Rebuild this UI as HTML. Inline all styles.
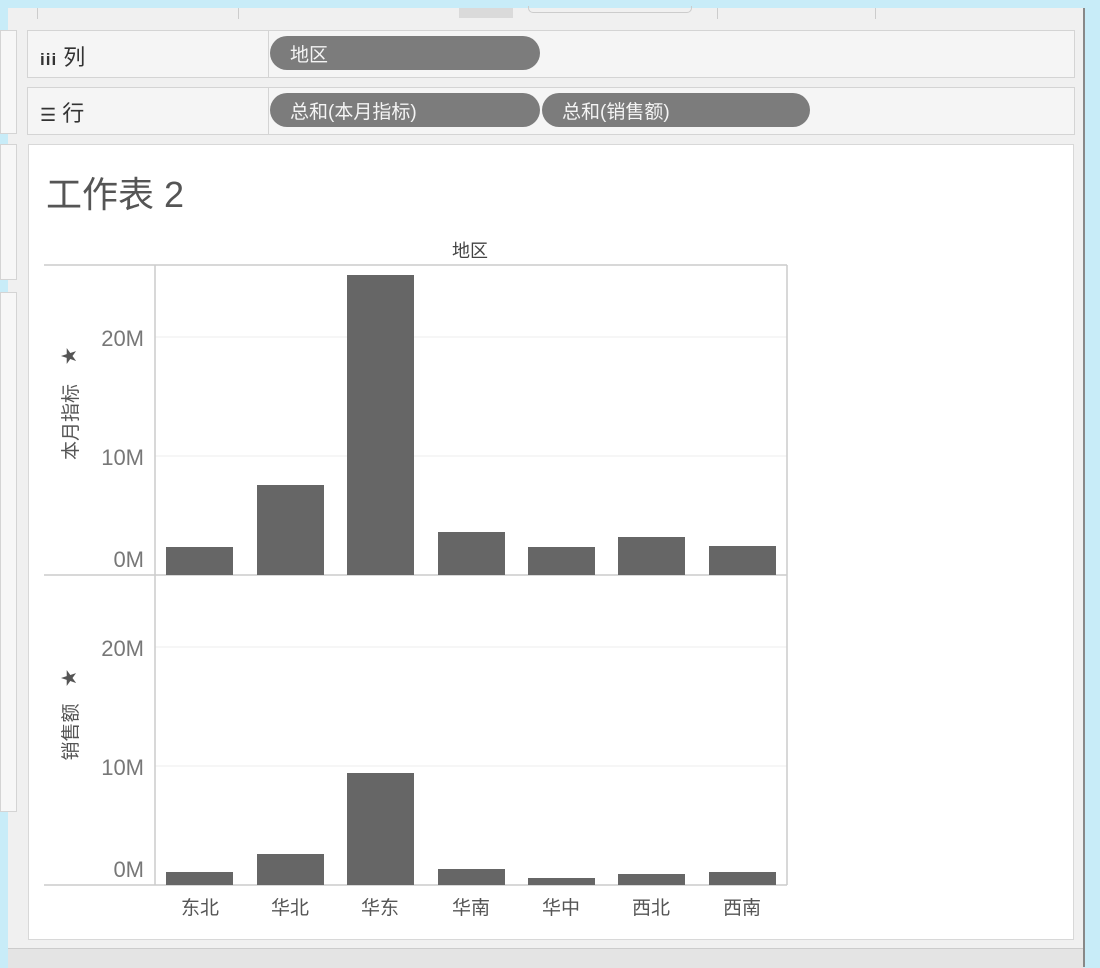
<!DOCTYPE html>
<html><head><meta charset="utf-8"><style>
body{margin:0;width:1100px;height:967px;background:#c8ecf8;position:relative;overflow:hidden;font-family:"Liberation Sans","Noto Sans CJK SC",sans-serif}
.a{position:absolute}
.shelf{background:#f5f5f5;border:1px solid #d4d4d4;box-sizing:border-box}
.pill{position:absolute;background:#7c7c7c;color:#f4f4f4;border-radius:18px;font-size:19px;line-height:40px;height:34px;padding-left:20px;box-sizing:border-box;overflow:hidden}
</style></head><body>
<div class="a" style="left:8px;top:8px;width:1077px;height:959px;background:#f0f0f0"></div>
<div class="a" style="left:37px;top:8px;width:1px;height:11px;background:#ccc"></div>
<div class="a" style="left:238px;top:8px;width:1px;height:11px;background:#ccc"></div>
<div class="a" style="left:459px;top:8px;width:54px;height:10px;background:#dadada"></div>
<div class="a" style="left:528px;top:6px;width:162px;height:6px;border:1px solid #ccc;border-top:none;border-radius:0 0 5px 5px"></div>
<div class="a" style="left:717px;top:8px;width:1px;height:11px;background:#ccc"></div>
<div class="a" style="left:875px;top:8px;width:1px;height:11px;background:#ccc"></div>
<div class="a" style="left:1083px;top:8px;width:2px;height:959px;background:#888"></div>
<div class="a shelf" style="left:0;top:30px;width:17px;height:104px;background:#f7f7f7"></div>
<div class="a shelf" style="left:0;top:144px;width:17px;height:136px;background:#f7f7f7"></div>
<div class="a shelf" style="left:0;top:292px;width:17px;height:520px;background:#f7f7f7"></div>
<div class="a shelf" style="left:27px;top:30px;width:1048px;height:48px"></div>
<div class="a" style="left:268px;top:30px;width:1px;height:48px;background:#d4d4d4"></div>
<div class="a" style="left:40px;top:40px;font-size:22px;color:#333"><b style="font-size:17px;letter-spacing:1px">iii</b> 列</div>
<div class="pill" style="left:270px;top:36px;width:270px">地区</div>
<div class="a shelf" style="left:27px;top:87px;width:1048px;height:48px"></div>
<div class="a" style="left:268px;top:87px;width:1px;height:48px;background:#d4d4d4"></div>
<div class="a" style="left:40px;top:96px;font-size:22px;color:#333"><span style="font-size:18px">☰</span> 行</div>
<div class="pill" style="left:270px;top:93px;width:270px">总和(本月指标)</div>
<div class="pill" style="left:542px;top:93px;width:268px">总和(销售额)</div>
<div class="a" style="left:28px;top:144px;width:1046px;height:796px;background:#fff;border:1px solid #d8d8d8;box-sizing:border-box"></div>
<div class="a" style="left:8px;top:948px;width:1075px;height:19px;background:#e4e4e4;border-top:1px solid #ccc"></div>
<div class="a" style="left:46px;top:166px;font-size:36px;color:#555">工作表 2</div>
<svg class="a" style="left:0;top:0" width="1100" height="967" font-family="Liberation Sans,Noto Sans CJK SC,sans-serif">
<text x="470" y="257" font-size="18" fill="#444" text-anchor="middle">地区</text>
<g stroke="#eee" stroke-width="1">
<line x1="155" y1="337" x2="787" y2="337"/><line x1="155" y1="456" x2="787" y2="456"/>
<line x1="155" y1="647" x2="787" y2="647"/><line x1="155" y1="766" x2="787" y2="766"/>
</g>
<g stroke="#ccc" stroke-width="1.5">
<line x1="44" y1="265" x2="787" y2="265"/>
<line x1="44" y1="575" x2="787" y2="575"/>
<line x1="44" y1="885" x2="787" y2="885"/>
<line x1="155" y1="265" x2="155" y2="885"/>
<line x1="787" y1="265" x2="787" y2="885"/>
</g>
<g fill="#666">
<rect x="166" y="547" width="67" height="28"/><rect x="257" y="485" width="67" height="90"/>
<rect x="347" y="275" width="67" height="300"/><rect x="438" y="532" width="67" height="43"/>
<rect x="528" y="547" width="67" height="28"/><rect x="618" y="537" width="67" height="38"/>
<rect x="709" y="546" width="67" height="29"/>
<rect x="166" y="872" width="67" height="13"/><rect x="257" y="854" width="67" height="31"/>
<rect x="347" y="773" width="67" height="112"/><rect x="438" y="869" width="67" height="16"/>
<rect x="528" y="878" width="67" height="7"/><rect x="618" y="874" width="67" height="11"/>
<rect x="709" y="872" width="67" height="13"/>
</g>
<g font-size="22" fill="#777" text-anchor="end">
<text x="144" y="346">20M</text><text x="144" y="465">10M</text><text x="144" y="567">0M</text>
<text x="144" y="656">20M</text><text x="144" y="775">10M</text><text x="144" y="877">0M</text>
</g>
<g font-size="19" fill="#555" text-anchor="middle">
<text x="200" y="914">东北</text><text x="290" y="914">华北</text><text x="380" y="914">华东</text>
<text x="471" y="914">华南</text><text x="561" y="914">华中</text><text x="651" y="914">西北</text><text x="742" y="914">西南</text>
</g>
<g font-size="19" fill="#555" text-anchor="middle">
<text transform="translate(77,422) rotate(-90)">本月指标</text>
<text transform="translate(77,732) rotate(-90)">销售额</text>
<text transform="translate(75,356) rotate(-90)" font-size="17">★</text>
<text transform="translate(75,678) rotate(-90)" font-size="17">★</text>
</g>
</svg>
</body></html>
